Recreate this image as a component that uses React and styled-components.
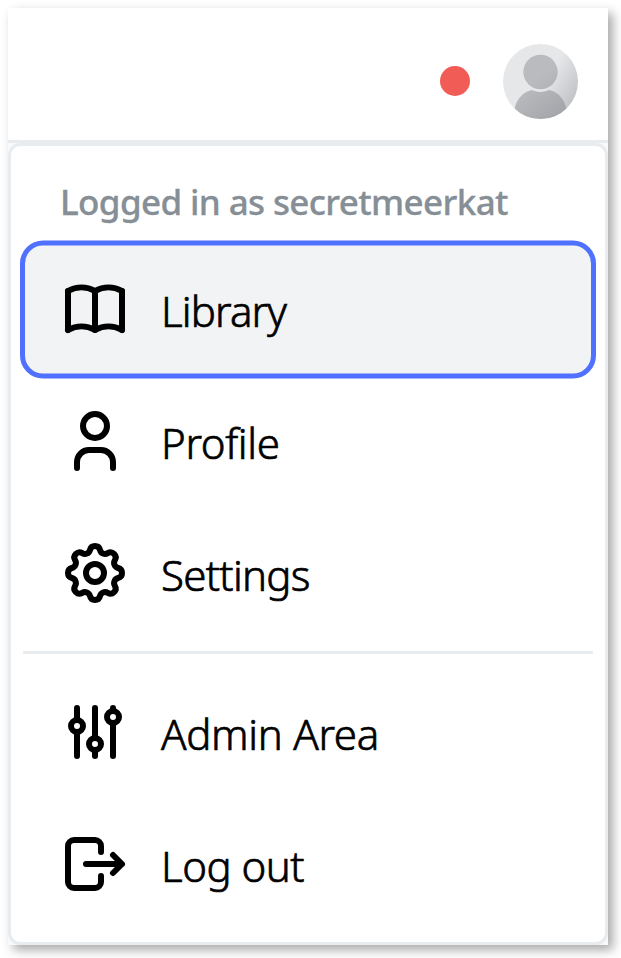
import React from 'react'
import styled, { createGlobalStyle } from 'styled-components'

const GlobalStyle = createGlobalStyle`
    * {
        box-sizing: border-box;
    }
    body {
        margin: 0;
        background-color: #fff;
        font-family: 'Noto Sans', 'Open Sans', sans-serif;
    }
`

const Page = styled.div`
    height: 958px;
    padding: 8px 13px 13px 8px;
    overflow: hidden;
`

const Frame = styled.main`
    width: 600px;
    height: 937px;
    display: flex;
    flex-direction: column;
    background-color: #f8f9fa;
    box-shadow: 5px 5px 10px rgba(0, 0, 0, 0.34);
`

const Header = styled.header`
    height: 135px;
    flex-shrink: 0;
    padding: 14px 30px 0 0;
    display: flex;
    align-items: center;
    justify-content: flex-end;
    gap: 33px;
    background-color: #fff;
    border-bottom: 3px solid #e9ecef;
`

const StatusDot = styled.span`
    width: 30px;
    height: 30px;
    border-radius: 50%;
    background-color: #f25c57;
`

const AvatarSvg = styled.svg`
    width: 75px;
    height: 75px;
    display: block;
`

const Menu = styled.nav`
    flex: 1;
    padding: 12px;
    background-color: #fff;
    border: 3px solid #e9ecef;
    border-radius: 12px;
`

const Label = styled.div`
    height: 85px;
    padding: 2px 36px 0 37px;
    display: flex;
    align-items: center;
    color: #868e96;
    font-size: 35px;
    font-weight: 500;
    letter-spacing: -0.62px;
    line-height: 1;
    white-space: nowrap;
    -webkit-text-stroke: 0.3px #868e96;
`

const Item = styled.button`
    position: relative;
    width: 100%;
    height: 132px;
    padding: 0 36px;
    display: flex;
    align-items: center;
    gap: 30px;
    border: none;
    border-radius: 20px;
    background-color: ${({ $active }) => ($active ? '#f1f3f5' : 'transparent')};
    color: #000;
    font-family: inherit;
    font-size: 42px;
    font-weight: 300;
    text-align: left;
    cursor: pointer;

    &::after {
        content: '';
        display: ${({ $active }) => ($active ? 'block' : 'none')};
        position: absolute;
        inset: -3px;
        border: 5px solid #5071ff;
        border-radius: 23px;
        transform: translateY(0.5px);
    }
`

const ItemText = styled.span`
    padding-top: 4px;
    letter-spacing: ${({ $spacing }) => $spacing}px;
    line-height: 1;
    white-space: nowrap;
    -webkit-text-stroke: 0.7px #000;
`

const Divider = styled.hr`
    height: 3px;
    margin: 12px 0;
    border: none;
    background-color: #e9ecef;
`

const IconSvg = styled.svg`
    width: 72px;
    height: 72px;
    flex-shrink: 0;
    fill: none;
    stroke: currentColor;
    stroke-width: 2;
    stroke-linecap: round;
    stroke-linejoin: round;
`

const BookIcon = () => (
    <IconSvg viewBox="0 0 24 24">
        <path d="M3 19a9 9 0 0 1 9 0a9 9 0 0 1 9 0" />
        <path d="M3 6a9 9 0 0 1 9 0a9 9 0 0 1 9 0" />
        <path d="M3 6v13M12 6v13M21 6v13" />
    </IconSvg>
)

const UserIcon = () => (
    <IconSvg viewBox="0 0 24 24">
        <circle cx="12" cy="7" r="4" />
        <path d="M6 21v-2a4 4 0 0 1 4-4h4a4 4 0 0 1 4 4v2" />
    </IconSvg>
)

const SettingsIcon = () => (
    <IconSvg viewBox="0 0 24 24">
        <path d="M10.325 4.317c.426-1.756 2.924-1.756 3.35 0a1.724 1.724 0 0 0 2.573 1.066c1.543-.94 3.31.826 2.37 2.37a1.724 1.724 0 0 0 1.065 2.572c1.756.426 1.756 2.924 0 3.35a1.724 1.724 0 0 0-1.066 2.573c.94 1.543-.826 3.31-2.37 2.37a1.724 1.724 0 0 0-2.572 1.065c-.426 1.756-2.924 1.756-3.35 0a1.724 1.724 0 0 0-2.573-1.066c-1.543.94-3.31-.826-2.37-2.37a1.724 1.724 0 0 0-1.065-2.572c-1.756-.426-1.756-2.924 0-3.35a1.724 1.724 0 0 0 1.066-2.573c-.94-1.543.826-3.31 2.37-2.37 1 .608 2.296.07 2.572-1.065z" />
        <circle cx="12" cy="12" r="3" />
    </IconSvg>
)

const AdjustmentsIcon = () => (
    <IconSvg viewBox="0 0 24 24">
        <circle cx="6" cy="10" r="2" />
        <path d="M6 4v4M6 12v8" />
        <circle cx="12" cy="16" r="2" />
        <path d="M12 4v10M12 18v2" />
        <circle cx="18" cy="7" r="2" />
        <path d="M18 4v1M18 9v11" />
    </IconSvg>
)

const LogoutIcon = () => (
    <IconSvg viewBox="0 0 24 24">
        <path d="M14 8V6a2 2 0 0 0-2-2H5a2 2 0 0 0-2 2v12a2 2 0 0 0 2 2h7a2 2 0 0 0 2-2v-2" />
        <path d="M9 12h12l-3-3M18 15l3-3" />
    </IconSvg>
)

const Avatar = () => (
    <AvatarSvg viewBox="0 0 75 75">
        <defs>
            <linearGradient id="avatarBack" x1="0" y1="0.2" x2="1" y2="0.8">
                <stop offset="0.55" stopColor="#e6e7e9" />
                <stop offset="1" stopColor="#bcbdc0" />
            </linearGradient>
            <linearGradient id="avatarBody" gradientUnits="userSpaceOnUse" x1="15" y1="25" x2="55" y2="75">
                <stop offset="0.3" stopColor="#b9bbbe" />
                <stop offset="1" stopColor="#a3a4a9" />
            </linearGradient>
            <clipPath id="avatarClip">
                <circle cx="37.5" cy="37.5" r="37.5" />
            </clipPath>
        </defs>
        <g clipPath="url(#avatarClip)">
            <rect width="75" height="75" fill="url(#avatarBack)" />
            <circle cx="37.5" cy="28" r="17.2" fill="url(#avatarBody)" />
            <path d="M11.5 66c1-9 8-18.500 17.500-20c5.500 2.500 11.500 2.500 17 0c9.500 1.500 16.500 11 17.500 20v9h-52z" fill="url(#avatarBody)" />
        </g>
    </AvatarSvg>
)

const mainItems = [
    { text: 'Library', icon: BookIcon, active: true, spacing: -0.85 },
    { text: 'Profile', icon: UserIcon, spacing: -0.35 },
    { text: 'Settings', icon: SettingsIcon, spacing: -0.7 },
]

const accountItems = [
    { text: 'Admin Area', icon: AdjustmentsIcon, spacing: -0.3 },
    { text: 'Log out', icon: LogoutIcon, spacing: -0.5 },
]

const MenuItem = ({ text, icon: Icon, active, spacing }) => (
    <Item type="button" $active={active}>
        <Icon />
        <ItemText $spacing={spacing}>{text}</ItemText>
    </Item>
)

const App = () => {
    return (
        <Page>
            <GlobalStyle />
            <Frame>
                <Header>
                    <StatusDot />
                    <Avatar />
                </Header>
                <Menu>
                    <Label>Logged in as secretmeerkat</Label>
                    {mainItems.map((item) => (
                        <MenuItem key={item.text} {...item} />
                    ))}
                    <Divider />
                    {accountItems.map((item) => (
                        <MenuItem key={item.text} {...item} />
                    ))}
                </Menu>
            </Frame>
        </Page>
    )
}

export default App
